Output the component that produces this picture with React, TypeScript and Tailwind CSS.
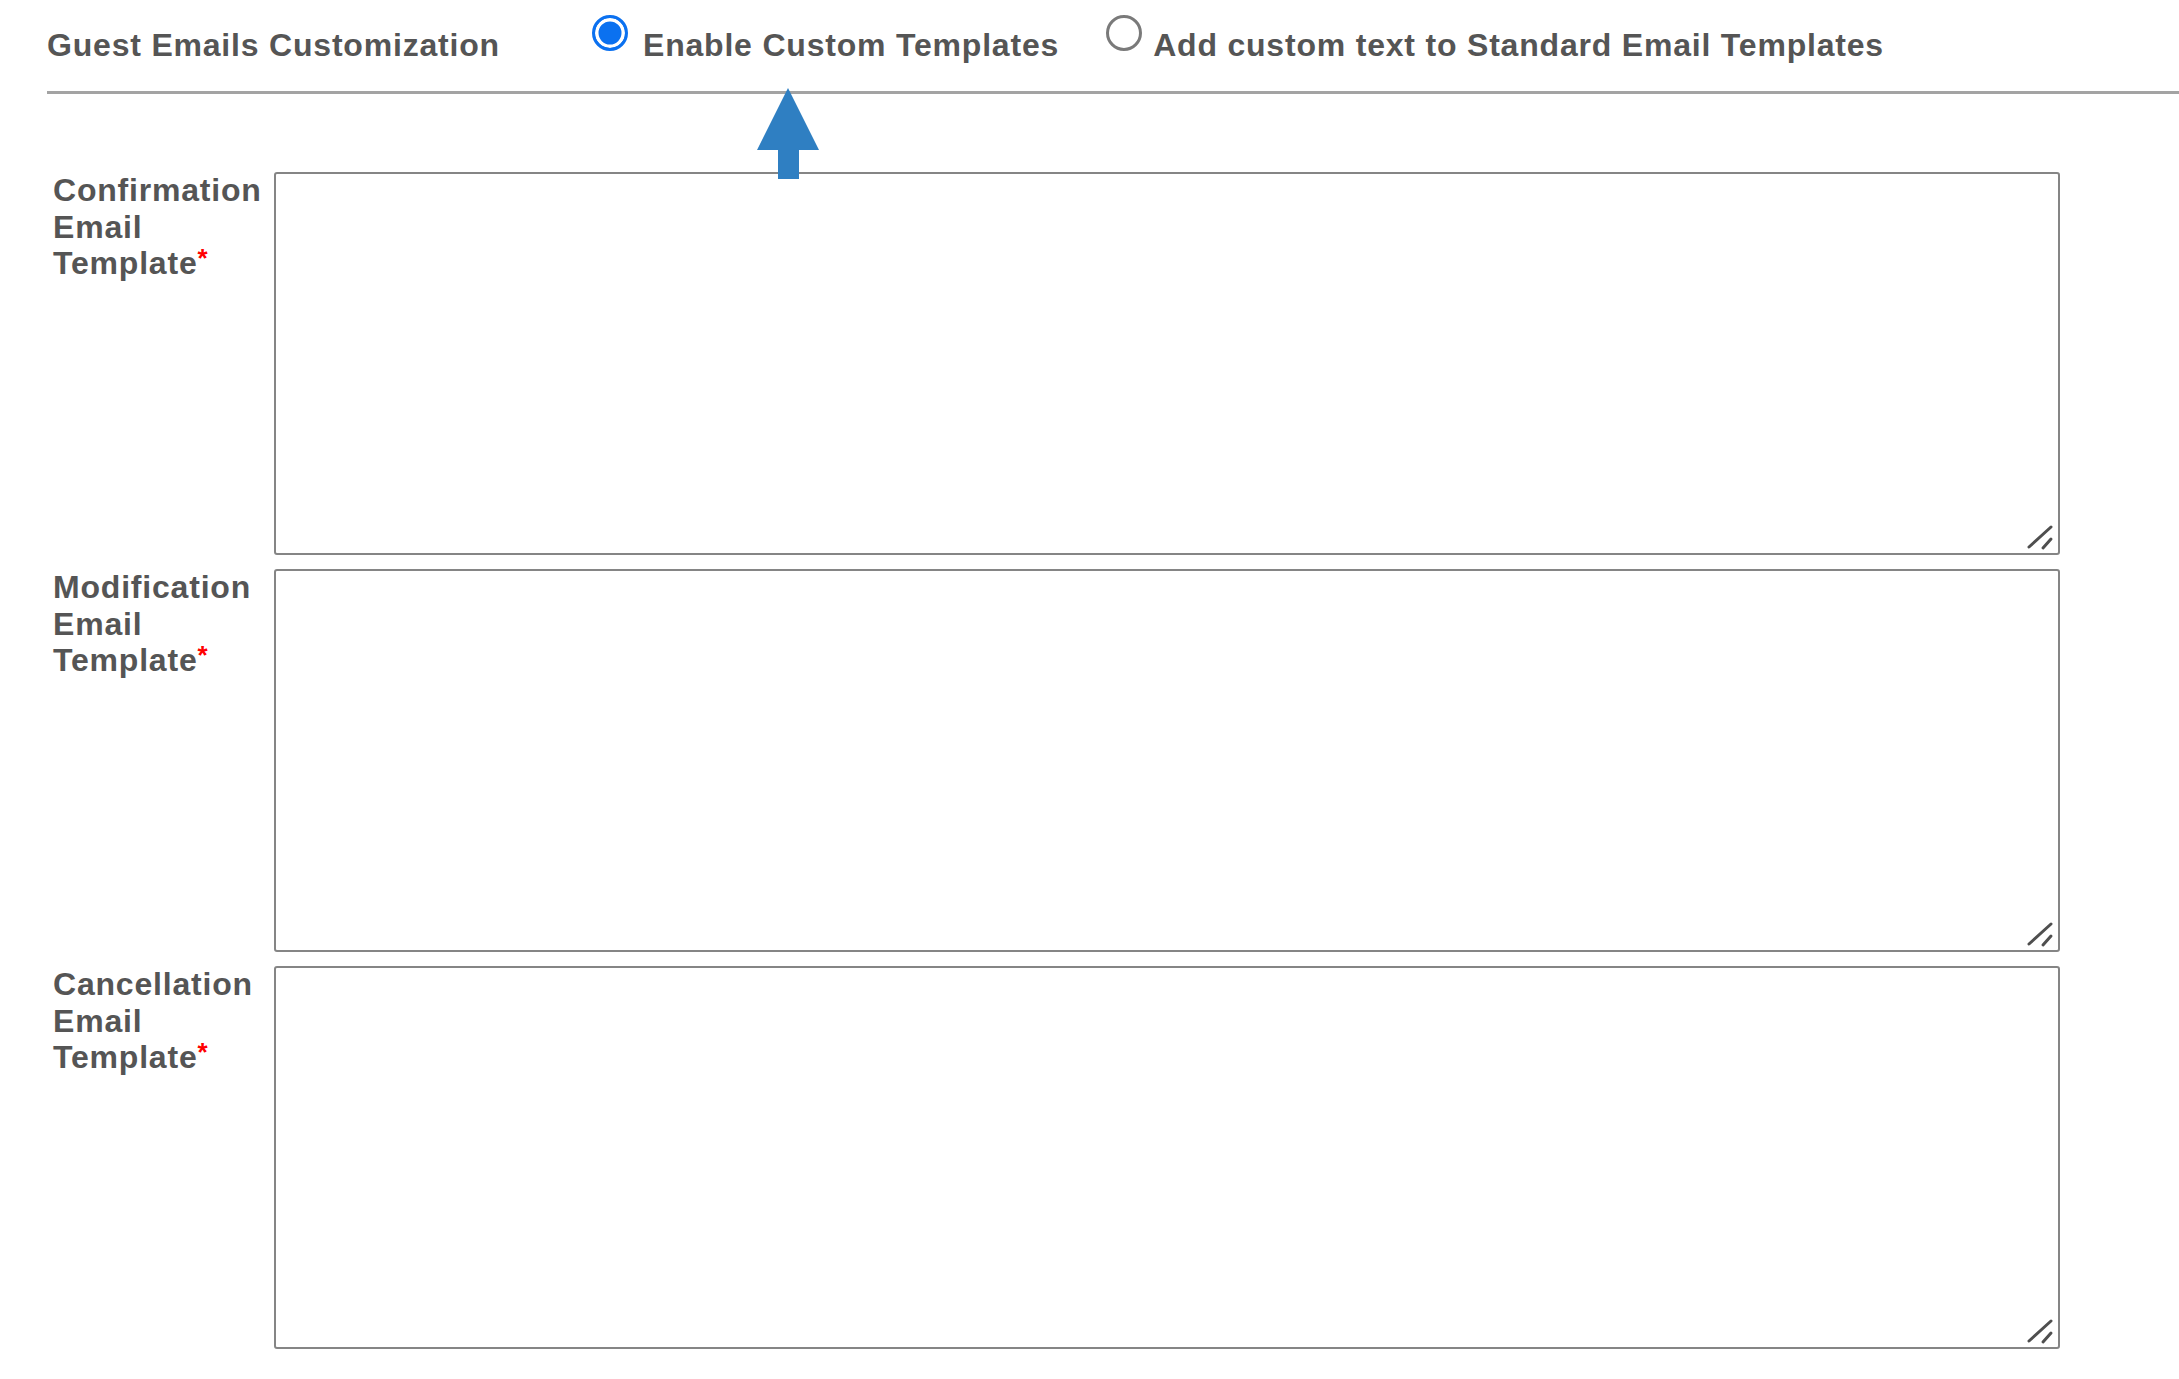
import React from "react";

const font = "font-['Liberation_Sans',Arial,sans-serif]";

function Grip() {
  return (
    <svg
      className="absolute right-0 bottom-0 pointer-events-none"
      width="40"
      height="40"
      viewBox="0 0 40 40"
    >
      <line x1="9" y1="32" x2="31" y2="12" stroke="#4f4f4f" strokeWidth="3" strokeLinecap="round" />
      <line x1="23" y1="33" x2="31" y2="24" stroke="#4f4f4f" strokeWidth="3" strokeLinecap="round" />
    </svg>
  );
}

function Row({ title }: { title: string }) {
  return (
    <div className="flex items-start">
      <label className="w-[221px] shrink-0 text-[32px] leading-[36.7px] tracking-[0.8px] font-bold text-[#555555]">
        {title}
        <br />
        Email
        <br />
        Template
        <span className="text-[#ff0000] text-[26px] align-top leading-[22px] relative top-[2px]">*</span>
      </label>
      <div className="relative w-[1786px] h-[383px] shrink-0">
        <textarea className="block w-full h-full resize-none border-2 border-[#858585] rounded-[3px] bg-white outline-none" />
        <Grip />
      </div>
    </div>
  );
}

export default function App() {
  return (
    <div className={`relative min-h-screen w-full bg-white overflow-hidden ${font}`}>
      <div className="pl-[47px]">
        <div className="flex items-start h-[91px] pt-[15px] text-[32px] leading-[36.7px] tracking-[0.8px] font-bold text-[#555555]">
          <div className="mt-[12px] w-[545px] shrink-0">Guest Emails Customization</div>
          <label className="flex items-start shrink-0">
            <input
              type="radio"
              name="mode"
              defaultChecked
              className="appearance-none w-[36px] h-[36px] rounded-full border-[3px] border-[#0b71f0] bg-[#0b71f0] shadow-[inset_0_0_0_3.5px_white] m-0 shrink-0"
            />
            <span className="mt-[12px] ml-[15px]">Enable Custom Templates</span>
          </label>
          <label className="flex items-start shrink-0 ml-[47px]">
            <input
              type="radio"
              name="mode"
              className="appearance-none w-[36px] h-[36px] rounded-full border-[3px] border-[#7a7a7a] bg-white m-0 shrink-0"
            />
            <span className="mt-[12px] ml-[11px]">Add custom text to Standard Email Templates</span>
          </label>
        </div>
        <div className="h-[3px] bg-[#a3a3a3]" />
      </div>

      <div className="flex flex-col gap-[14px] pt-[78px] pl-[53px] pb-[28px]">
        <Row title="Confirmation" />
        <Row title="Modification" />
        <Row title="Cancellation" />
      </div>

      <svg
        className="absolute left-[757px] top-[88px]"
        width="62"
        height="91"
        viewBox="0 0 62 91"
      >
        <polygon points="31,0 62,62 42,62 42,91 21,91 21,62 0,62" fill="#2f7fc2" />
      </svg>
    </div>
  );
}
